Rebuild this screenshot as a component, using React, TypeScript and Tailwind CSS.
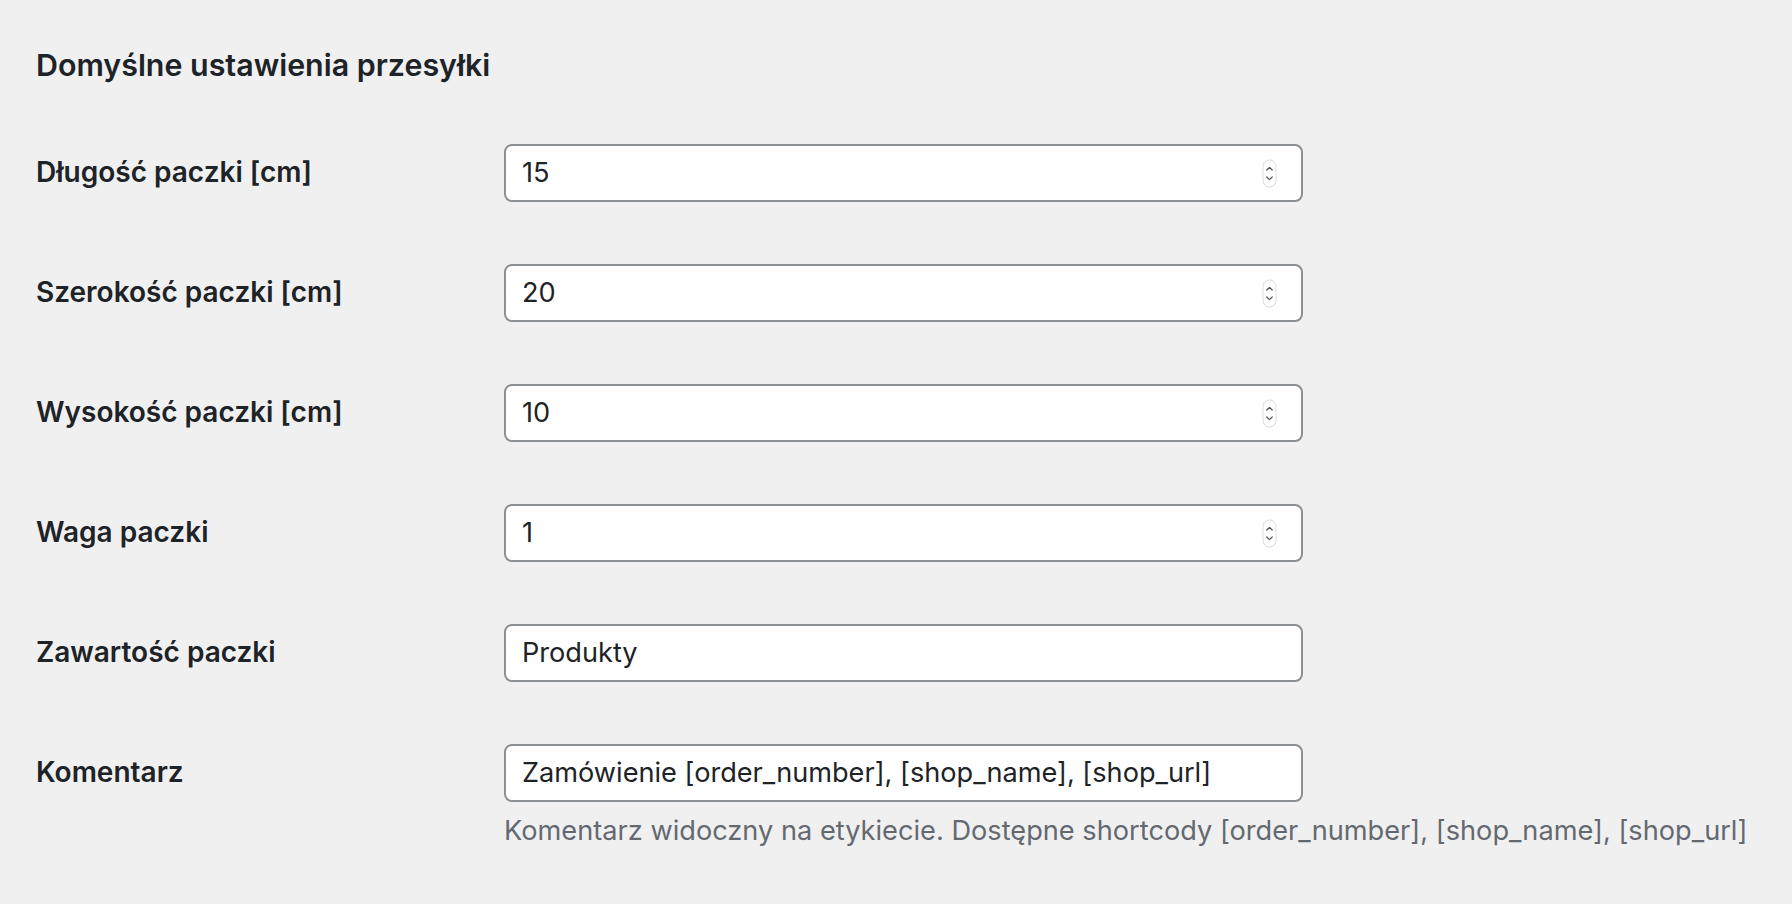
const fields = [
  { label: "Długość paczki [cm]", value: "15", number: true },
  { label: "Szerokość paczki [cm]", value: "20", number: true },
  { label: "Wysokość paczki [cm]", value: "10", number: true },
  { label: "Waga paczki", value: "1", number: true },
  { label: "Zawartość paczki", value: "Produkty", number: false },
];

function Spinner() {
  return (
    <svg width="15" height="29" viewBox="0 0 15 29" className="shrink-0">
      <rect x="1" y="1" width="13" height="27" rx="6.5" fill="#fff" stroke="#dcdcde" strokeWidth="1" />
      <path d="M4.8 11 L7.5 8.4 L10.2 11" fill="none" stroke="#50575e" strokeWidth="1.3" strokeLinecap="round" strokeLinejoin="round" />
      <path d="M4.8 18 L7.5 20.6 L10.2 18" fill="none" stroke="#50575e" strokeWidth="1.3" strokeLinecap="round" strokeLinejoin="round" />
    </svg>
  );
}

function Field({ value, number }: { value: string; number?: boolean }) {
  return (
    <div className="flex h-[58px] w-[799px] items-center justify-between rounded-[8px] border-2 border-[#8c8f94] bg-white pl-[16px] pr-[24px]">
      <span className="text-[27.15px] leading-none text-[#1d2327]">{value}</span>
      {number && <Spinner />}
    </div>
  );
}

export default function App() {
  return (
    <div className="min-h-screen bg-[#f0f0f1] pl-[36px] pt-[47px] text-[#1d2327] font-['Inter','Liberation_Sans',sans-serif]">
      <h2 className="text-[30.4px] font-semibold leading-[36px]">Domyślne ustawienia przesyłki</h2>

      <div className="mt-[61px] flex flex-col gap-[62px]">
        {fields.map((f) => (
          <div key={f.label} className="flex items-start">
            <label className="flex h-[56px] w-[468px] items-center text-[28px] font-semibold">{f.label}</label>
            <Field value={f.value} number={f.number} />
          </div>
        ))}

        <div className="flex items-start">
          <label className="flex h-[56px] w-[468px] items-center text-[28px] font-semibold">Komentarz</label>
          <div className="flex flex-col">
            <Field value="Zamówienie [order_number], [shop_name], [shop_url]" />
            <p className="mt-[9px] text-[27.2px] leading-[40px] text-[#646970]">
              Komentarz widoczny na etykiecie. Dostępne shortcody [order_number], [shop_name], [shop_url]
            </p>
          </div>
        </div>
      </div>
    </div>
  );
}
